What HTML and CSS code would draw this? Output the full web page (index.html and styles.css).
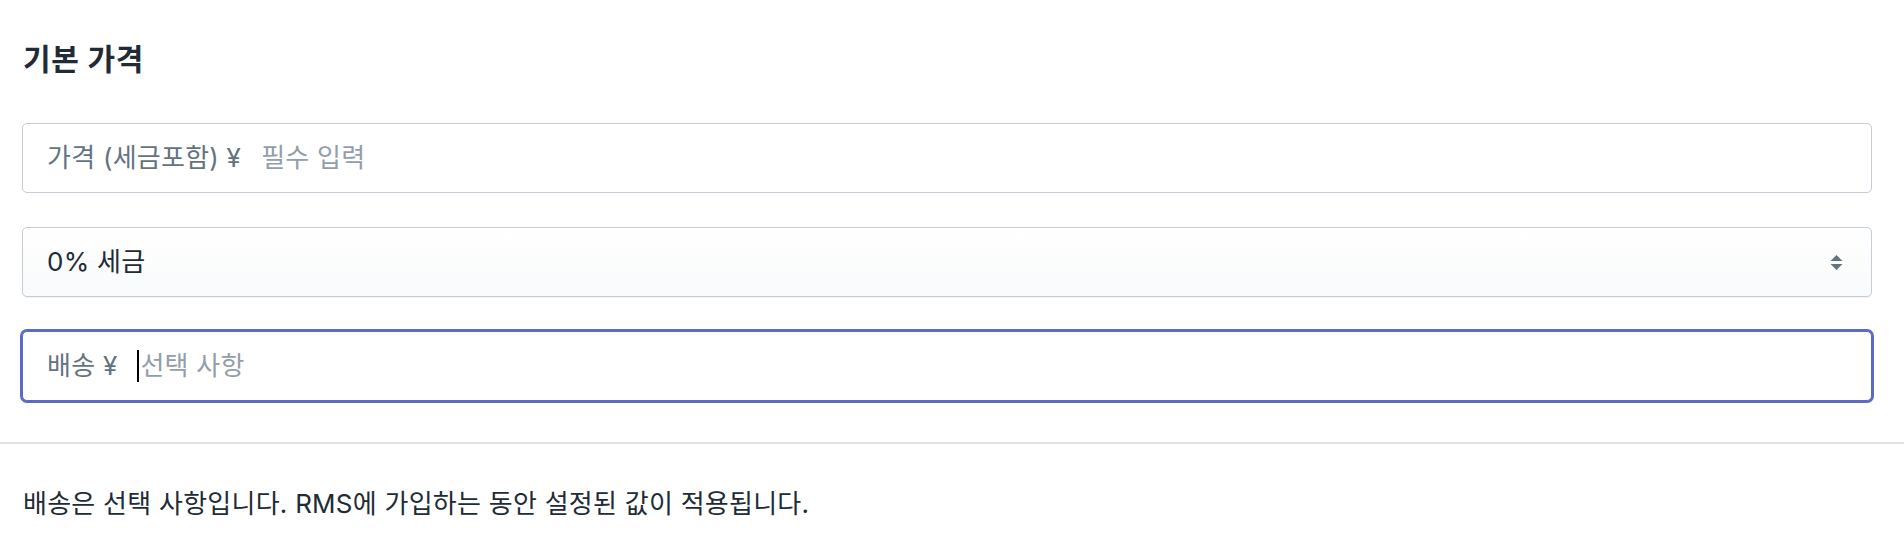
FILE: index.html
```html
<!DOCTYPE html>
<html lang="ko">
<head>
<meta charset="utf-8">
<title>기본 가격</title>
<link rel="stylesheet" href="styles.css">
</head>
<body>
<div class="card">
  <section class="section">
    <h2 class="heading">기본 가격</h2>
    <div class="fields">
      <div class="field">
        <span class="prefix">가격 (세금포함) ¥</span>
        <span class="placeholder">필수 입력</span>
      </div>
      <div class="field select">
        <span class="value">0% 세금</span>
        <svg class="arrows" width="13" height="22" viewBox="0 0 13 22" aria-hidden="true">
          <path d="M6.5 4 L12.5 10 L0.5 10 Z" fill="#637381"/>
          <path d="M0.5 13 L12.5 13 L6.5 19 Z" fill="#637381"/>
        </svg>
      </div>
      <div class="field focused">
        <span class="prefix">배송 ¥</span>
        <span class="caret"></span>
        <span class="placeholder">선택 사항</span>
      </div>
    </div>
  </section>
  <div class="divider"></div>
  <section class="footer">
    <p class="note">배송은 선택 사항입니다. RMS에 가입하는 동안 설정된 값이 적용됩니다.</p>
  </section>
</div>
</body>
</html>
```

FILE: styles.css
```css
html, body {
  margin: 0;
  padding: 0;
  background: #ffffff;
}

body {
  font-family: Inter, "Noto Sans CJK KR", "Noto Sans", sans-serif;
  color: #212b36;
}

.section {
  padding: 43px 32px 41px 22px;
}

.heading {
  margin: 0;
  font-size: 30px;
  line-height: 32px;
  font-weight: 600;
  letter-spacing: 0.6px;
  color: #212b36;
  padding-left: 1px;
}

.fields {
  margin-top: 48px;
  display: flex;
  flex-direction: column;
  gap: 34px;
}

.field {
  box-sizing: border-box;
  height: 70px;
  border: 1px solid #c4cdd5;
  border-radius: 5px;
  background: #ffffff;
  display: flex;
  align-items: center;
  padding: 0 24px;
  font-size: 26px;
  line-height: 32px;
  letter-spacing: 0.25px;
}

.prefix {
  color: #637381;
  margin-right: 20px;
}

.placeholder {
  color: #919eab;
}

.select {
  background: linear-gradient(180deg, #ffffff, #f9fafb);
  box-shadow: 0 1px 0 rgba(22, 29, 37, 0.05);
  justify-content: space-between;
  padding-right: 28px;
}

.value {
  color: #212b36;
}

.arrows {
  display: block;
}

.focused {
  border-color: #5c6ac4;
  box-shadow: 0 0 0 2px #5c6ac4;
}

.caret {
  width: 2px;
  height: 32px;
  background: #000000;
  margin-right: 1px;
}

.divider {
  height: 2px;
  background: #dfe3e8;
}

.footer {
  padding: 44px 32px 20px 23px;
}

.note {
  margin: 0;
  font-size: 26px;
  line-height: 32px;
  letter-spacing: 0.25px;
  color: #212b36;
}
```
